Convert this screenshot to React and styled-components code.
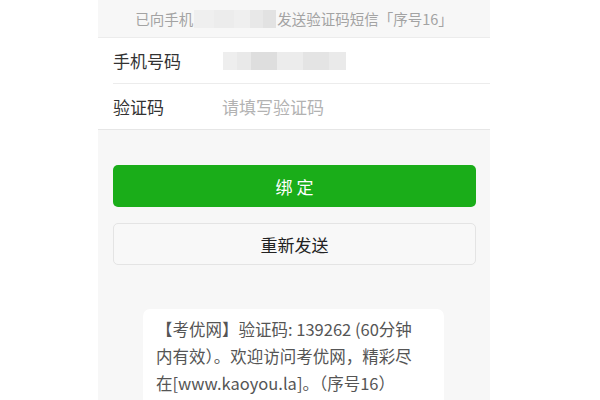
import React from 'react';
import styled, { createGlobalStyle } from 'styled-components';

const GlobalStyle = createGlobalStyle`
    html, body {
        margin: 0;
        padding: 0;
        background: #ffffff;
        font-family: "Noto Sans CJK SC", "Noto Sans", sans-serif;
    }
`;

const Page = styled.div`
    width: 600px;
    height: 400px;
    overflow: hidden;
    background: #ffffff;
`;

const Panel = styled.div`
    width: 392px;
    min-height: 400px;
    margin-left: 98px;
    background: #f7f7f7;
    display: flex;
    flex-direction: column;
    & > * {
        flex-shrink: 0;
    }
`;

const Notice = styled.div`
    height: 37px;
    display: flex;
    align-items: center;
    justify-content: center;
    font-size: 14.5px;
    color: #a3a3a3;
    white-space: nowrap;
`;

const Blur = styled.span`
    display: inline-flex;
    height: ${props => props.height}px;
    margin: 0 1px;
`;

const BlurBit = styled.span`
    display: block;
    width: ${props => props.width}px;
    background: ${props => props.shade};
`;

const Form = styled.div`
    background: #ffffff;
    border-top: 1px solid #ececec;
    border-bottom: 1px solid #e6e6e6;
    padding-left: 15px;
`;

const Row = styled.div`
    height: 45px;
    display: flex;
    align-items: center;
    & + & {
        border-top: 1px solid #ececec;
    }
`;

const Label = styled.div`
    width: 109px;
    font-size: 17px;
    color: #333333;
`;

const Placeholder = styled.div`
    font-size: 17px;
    color: #b2b2b2;
`;

const Actions = styled.div`
    padding: 35px 14px 0 15px;
    display: flex;
    flex-direction: column;
    gap: 16px;
`;

const Button = styled.div`
    height: ${props => (props.primary ? 42 : 40)}px;
    border-radius: 5px;
    display: flex;
    align-items: center;
    justify-content: center;
    font-size: 17px;
    background: ${props => (props.primary ? '#1aad19' : '#f8f8f8')};
    color: ${props => (props.primary ? '#ffffff' : '#222222')};
    border: ${props => (props.primary ? 'none' : '1px solid #e4e4e4')};
    letter-spacing: ${props => (props.primary ? '4px' : '0')};
    text-indent: ${props => (props.primary ? '4px' : '0')};
`;

const Message = styled.div`
    margin: 44px 46px 0 45px;
    padding: 7px 10px 20px 13px;
    background: #ffffff;
    border-radius: 7px;
    font-size: 16.5px;
    line-height: 27px;
    color: #555555;
`;

const MessageLine = styled.div`
    white-space: nowrap;
`;

const phoneTop = [
    [20, '#efefef'], [20, '#ececec'], [16, '#efefef'], [13, '#e8e8e8'], [13, '#e2e2e2'],
];
const phoneRow = [
    [14, '#eeeeee'], [14, '#e9e9e9'], [26, '#dedede'], [26, '#ececec'], [26, '#e4e4e4'], [17, '#eaeaea'],
];

const smsLines = [
    '【考优网】验证码: 139262 (60分钟',
    '内有效）。欢迎访问考优网，精彩尽',
    '在[www.kaoyou.la]。（序号16）',
];

const BlurredNumber = ({ bits, height }) => (
    <Blur height={height}>
        {bits.map(([w, c], i) => <BlurBit key={i} width={w} shade={c} />)}
    </Blur>
);

const App = () => (
    <Page>
        <GlobalStyle />
        <Panel>
            <Notice>
                已向手机
                <BlurredNumber bits={phoneTop} height={18} />
                发送验证码短信「序号16」
            </Notice>
            <Form>
                <Row>
                    <Label>手机号码</Label>
                    <BlurredNumber bits={phoneRow} height={18} />
                </Row>
                <Row>
                    <Label>验证码</Label>
                    <Placeholder>请填写验证码</Placeholder>
                </Row>
            </Form>
            <Actions>
                <Button primary>绑定</Button>
                <Button>重新发送</Button>
            </Actions>
            <Message>
                {smsLines.map(line => <MessageLine key={line}>{line}</MessageLine>)}
            </Message>
        </Panel>
    </Page>
);

export default App;
